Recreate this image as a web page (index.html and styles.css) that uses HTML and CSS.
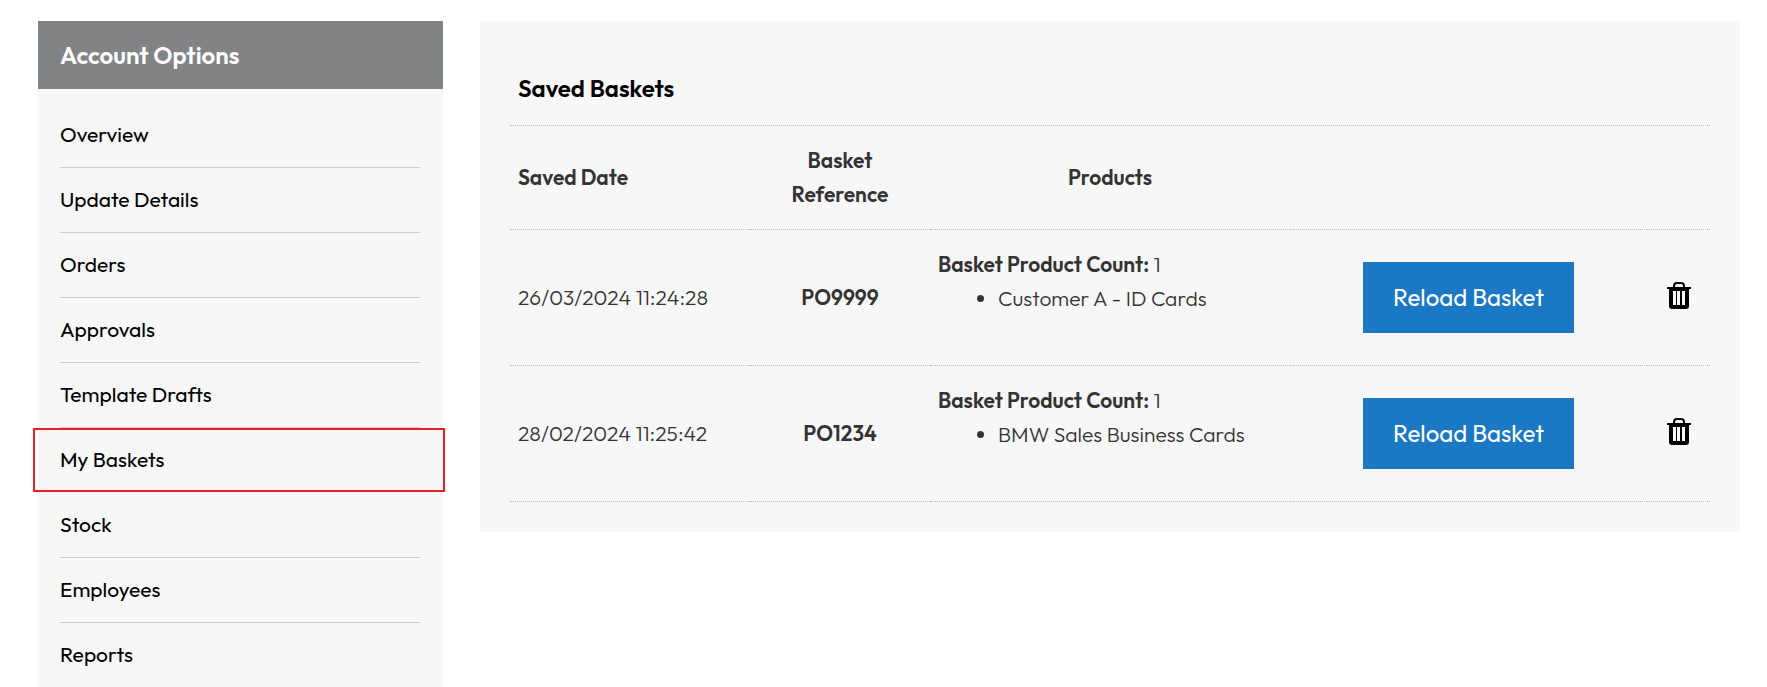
FILE: index.html
```html
<!DOCTYPE html>
<html lang="en">
<head>
    <meta charset="UTF-8">
    <meta name="viewport" content="width=device-width, initial-scale=1.0">
    <title>Saved Baskets</title>
    <link rel="stylesheet" href="styles.css">
</head>
<body>
    <div class="container">
        <nav class="sidebar" aria-labelledby="account-title">
            <h2 class="sidebar-title" id="account-title">Account Options</h2>
            <ul class="menu">
                <li><a href="#">Overview</a></li>
                <li><a href="#">Update Details</a></li>
                <li><a href="#">Orders</a></li>
                <li><a href="#">Approvals</a></li>
                <li><a href="#">Template Drafts</a></li>
                <li class="active"><a href="#" aria-current="page">My Baskets</a></li>
                <li><a href="#">Stock</a></li>
                <li><a href="#">Employees</a></li>
                <li><a href="#">Reports</a></li>
            </ul>
        </nav>

        <main class="content">
            <table class="baskets">
                <caption>Saved Baskets</caption>
                <colgroup>
                    <col class="col-date">
                    <col class="col-ref">
                    <col class="col-products">
                    <col class="col-reload">
                    <col class="col-delete">
                </colgroup>
                <thead>
                    <tr>
                        <th class="date">Saved Date</th>
                        <th>Basket<br>Reference</th>
                        <th>Products</th>
                        <th></th>
                        <th></th>
                    </tr>
                </thead>
                <tbody>
                    <tr>
                        <td class="date">26/03/2024 11:24:28</td>
                        <td class="ref">PO9999</td>
                        <td class="products">
                            <strong>Basket Product Count:</strong> 1
                            <ul>
                                <li>Customer A - ID Cards</li>
                            </ul>
                        </td>
                        <td><button type="button" class="reload">Reload Basket</button></td>
                        <td>
                            <button type="button" class="delete" aria-label="Delete basket PO9999">
                                <svg width="24" height="27" viewBox="0 0 24 27">
                                    <path d="M7 6V4Q7 1 10 1H14Q17 1 17 4V6" fill="none" stroke="#000" stroke-width="2"/>
                                    <path fill-rule="evenodd" d="M0 5H24V7H22V24Q22 27 19 27H5Q2 27 2 24V7H0ZM6 9V23H9V9ZM10 9V23H13V9ZM15 9V23H18V9Z"/>
                                </svg>
                            </button>
                        </td>
                    </tr>
                    <tr>
                        <td class="date">28/02/2024 11:25:42</td>
                        <td class="ref">PO1234</td>
                        <td class="products">
                            <strong>Basket Product Count:</strong> 1
                            <ul>
                                <li>BMW Sales Business Cards</li>
                            </ul>
                        </td>
                        <td><button type="button" class="reload">Reload Basket</button></td>
                        <td>
                            <button type="button" class="delete" aria-label="Delete basket PO1234">
                                <svg width="24" height="27" viewBox="0 0 24 27">
                                    <path d="M7 6V4Q7 1 10 1H14Q17 1 17 4V6" fill="none" stroke="#000" stroke-width="2"/>
                                    <path fill-rule="evenodd" d="M0 5H24V7H22V24Q22 27 19 27H5Q2 27 2 24V7H0ZM6 9V23H9V9ZM10 9V23H13V9ZM15 9V23H18V9Z"/>
                                </svg>
                            </button>
                        </td>
                    </tr>
                </tbody>
            </table>
        </main>
    </div>
</body>
</html>
```
FILE: styles.css
```css
* {
    box-sizing: border-box;
}
body {
    margin: 0;
    background: #fff;
    color: #333;
    font-family: Outfit, Lato, sans-serif;
    font-size: 21px;
    font-weight: 300;
    line-height: 34px;
}
.container {
    display: flex;
    align-items: flex-start;
    gap: 37px;
    height: 100vh;
    padding: 21px 27px 0 38px;
    overflow: hidden;
}

/* Sidebar */
.sidebar {
    flex: 0 0 405px;
    background: #f7f7f7;
}
.sidebar-title {
    margin: 0;
    padding: 17px 22px;
    background: #828385;
    color: #fff;
    font-size: 24px;
    font-weight: 600;
}
.menu {
    list-style: none;
    margin: 0;
    padding: 14px 23px 14px 22px;
}
.menu li {
    position: relative;
    border-bottom: 1px solid #ccc;
}
.menu a {
    display: block;
    padding: 14px 0 16px;
    color: #000;
    font-weight: 400;
    text-decoration: none;
}
.menu .active {
    border-bottom-color: transparent;
}
.menu .active::after {
    content: "";
    position: absolute;
    inset: 0 -25px 0 -27px;
    border: 2px solid #ed1c24;
    pointer-events: none;
}

/* Saved baskets */
.content {
    flex: 1;
    min-width: 0;
    padding: 30px;
    background: #f7f7f7;
}
.baskets {
    width: 100%;
    table-layout: fixed;
    border-collapse: separate;
    border-spacing: 0;
}
.baskets caption {
    padding: 20px 8px;
    border-bottom: 1px dotted #bbb;
    color: #000;
    font-size: 24px;
    font-weight: 600;
    text-align: left;
}
.col-date {
    width: 20%;
}
.col-ref {
    width: 15%;
}
.col-products {
    width: 30%;
}
.col-delete {
    width: 63px;
}
.baskets th,
.baskets td {
    padding: 17px 8px 18px;
    border-bottom: 1px dotted #bbb;
    text-align: center;
    vertical-align: middle;
}
.baskets th {
    font-weight: 600;
}
.baskets .date,
.baskets .products {
    text-align: left;
}
.ref,
.products strong {
    font-weight: 600;
}
.products ul {
    margin: 0 0 32px;
    padding-left: 60px;
}
.reload {
    padding: 18px 30px 19px;
    border: 0;
    background: #1a78c5;
    color: #fff;
    font: inherit;
    font-size: 24px;
    font-weight: 400;
    cursor: pointer;
}
.delete {
    padding: 0 0 6px;
    border: 0;
    background: none;
    vertical-align: middle;
    cursor: pointer;
}
.delete svg {
    display: block;
}
```
